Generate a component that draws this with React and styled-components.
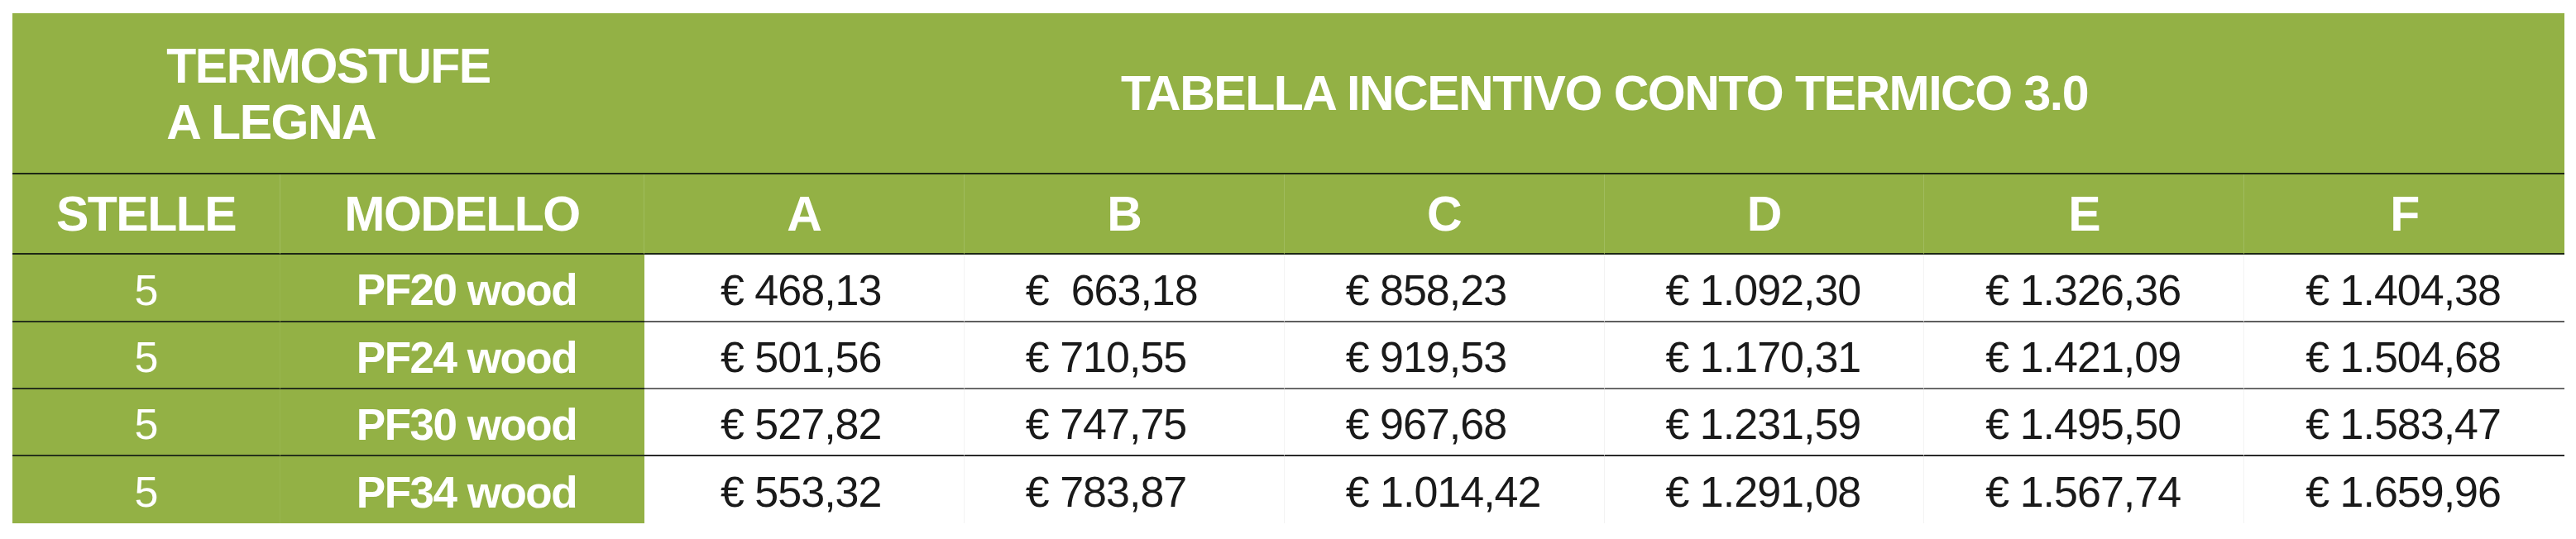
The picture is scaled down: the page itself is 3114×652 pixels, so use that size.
import styled, { createGlobalStyle } from 'styled-components'

const GlobalStyle = createGlobalStyle`
  body {
    margin: 0;
    background: #FFFFFF;
    font-family: "Liberation Sans", Arial, sans-serif;
  }
`

const GREEN = '#93B145'

const Page = styled.div`
  padding: 16px 0 0 15px;
`

const Table = styled.div`
  width: 3085px;
  display: grid;
  grid-template-columns: 324px 440px repeat(6, 1fr);
  grid-template-rows: 195px 97px 82px 81px 81px 81px;
`

const TitleCell = styled.div`
  grid-column: ${p => p.$span};
  background: ${GREEN};
  border-bottom: 2px solid #1C2714;
  display: flex;
  align-items: center;
  justify-content: center;
  color: #FFFFFF;
  font-weight: bold;
  font-size: 59px;
  letter-spacing: -1.5px;
  white-space: nowrap;
`

const TitleBlock = styled.div`
  text-align: left;
  line-height: 68px;
  padding-top: 2px;
`

const HeadCell = styled.div`
  background: ${GREEN};
  border-bottom: 2px solid #1C2714;
  border-right: ${p => (p.$last ? 'none' : '1px solid #A0BC5E')};
  display: flex;
  align-items: center;
  justify-content: center;
  color: #FFFFFF;
  font-weight: bold;
  font-size: 59px;
  letter-spacing: -1.5px;
`

const GreenCell = styled.div`
  background: ${GREEN};
  border-bottom: ${p => (p.$last ? 'none' : '2px solid #26321B')};
  border-right: ${p => (p.$sep ? '1px solid #98B54F' : 'none')};
  display: flex;
  align-items: center;
  justify-content: center;
  padding: 5px 0 0 ${p => p.$shift || 0}px;
  color: #FFFFFF;
  font-size: ${p => (p.$bold ? 53 : 52)}px;
  font-weight: ${p => (p.$bold ? 'bold' : 'normal')};
  letter-spacing: ${p => (p.$bold ? -1.5 : -1)}px;
`

const PriceCell = styled.div`
  background: #FFFFFF;
  border-bottom: ${p => (p.$line ? `2px solid ${p.$line}` : 'none')};
  border-right: ${p => (p.$last ? 'none' : '1px solid #F3F3F3')};
  display: flex;
  align-items: center;
  padding: 5px 0 0 ${p => (p.$first ? 92 : 74)}px;
  color: #1A1A1A;
  font-size: 52px;
  letter-spacing: -1px;
  white-space: pre;
`

const columns = ['A', 'B', 'C', 'D', 'E', 'F']

const rows = [
  { stars: '5', model: 'PF20 wood', line: '#5E5E5E', prices: ['€ 468,13', '€  663,18', '€ 858,23', '€ 1.092,30', '€ 1.326,36', '€ 1.404,38'] },
  { stars: '5', model: 'PF24 wood', line: '#6A6A6A', prices: ['€ 501,56', '€ 710,55', '€ 919,53', '€ 1.170,31', '€ 1.421,09', '€ 1.504,68'] },
  { stars: '5', model: 'PF30 wood', line: '#2A2A2A', prices: ['€ 527,82', '€ 747,75', '€ 967,68', '€ 1.231,59', '€ 1.495,50', '€ 1.583,47'] },
  { stars: '5', model: 'PF34 wood', line: null, prices: ['€ 553,32', '€ 783,87', '€ 1.014,42', '€ 1.291,08', '€ 1.567,74', '€ 1.659,96'] },
]

export default function App() {
  return (
    <Page>
      <GlobalStyle />
      <Table>
        <TitleCell $span="1 / 3">
          <TitleBlock>
            TERMOSTUFE<br />
            A LEGNA
          </TitleBlock>
        </TitleCell>
        <TitleCell $span="3 / 9">TABELLA INCENTIVO CONTO TERMICO 3.0</TitleCell>

        <HeadCell>STELLE</HeadCell>
        <HeadCell>MODELLO</HeadCell>
        {columns.map((c, i) => (
          <HeadCell key={c} $last={i === columns.length - 1}>{c}</HeadCell>
        ))}

        {rows.map((r, ri) => {
          const last = ri === rows.length - 1
          return [
            <GreenCell key={`s${ri}`} $sep $last={last}>{r.stars}</GreenCell>,
            <GreenCell key={`m${ri}`} $bold $shift={10} $last={last}>{r.model}</GreenCell>,
            ...r.prices.map((p, pi) => (
              <PriceCell
                key={`p${ri}-${pi}`}
                $first={pi === 0}
                $last={pi === r.prices.length - 1}
                $line={r.line}
              >
                {p}
              </PriceCell>
            )),
          ]
        })}
      </Table>
    </Page>
  )
}
